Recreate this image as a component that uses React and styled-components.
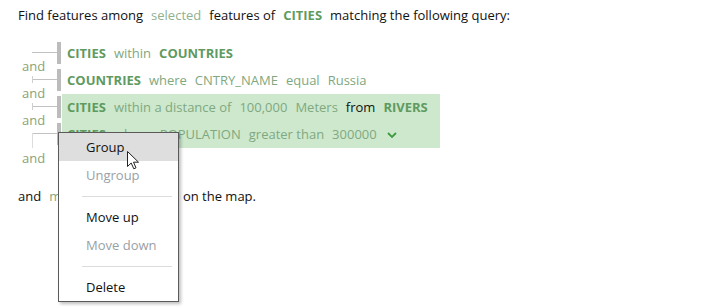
import styled, { createGlobalStyle } from "styled-components";

const GlobalStyle = createGlobalStyle`
  body {
    margin: 0;
    background: #fff;
    font-family: "Open Sans", "Noto Sans", sans-serif;
    font-size: 13px;
    color: #111;
  }
`;

const Page = styled.div`
  position: relative;
  min-height: 308px;
  box-sizing: border-box;
  padding: 6px 18px;
`;

const Sentence = styled.div`
  line-height: 18px;
  white-space: nowrap;
`;

const Word = styled.span`
  margin: 0 4px;
  color: ${({ $kind }) =>
    $kind === "layer" ? "#5f9a5f" : $kind === "op" ? "#80a880" : $kind === "link" ? "#90b090" : "#111"};
  font-weight: ${({ $kind }) => ($kind === "layer" ? 700 : 400)};
  &:first-child {
    margin-left: 0;
  }
`;

const Tree = styled.div`
  display: inline-grid;
  grid-template-columns: 39px 5px auto;
  margin-top: 16px;
`;

const Gutter = styled.div`
  height: 27px;
  display: flex;
  flex-direction: column;
`;

const AndLabel = styled.div`
  flex-shrink: 0;
  margin: 2px 0 0 4px;
  line-height: 16px;
  color: #8aa374;
`;

const Bar = styled.div`
  background: #bcbcbc;
  margin: 2px 1px 3px 0;
`;

const Content = styled.div`
  height: 27px;
  line-height: 27px;
  padding: 0 8px 0 5px;
  white-space: nowrap;
  background: ${({ $selected }) => ($selected ? "#cde8cd" : "transparent")};
`;

const Closing = styled(Sentence)`
  margin-top: 21px;
`;

const Menu = styled.div`
  position: absolute;
  left: 58px;
  top: 132px;
  width: 119px;
  background: #fff;
  border: 1px solid #5a5a5a;
  box-shadow: 2px 2px 3px rgba(0, 0, 0, 0.25);
`;

const MenuItem = styled.div`
  height: 28px;
  line-height: 28px;
  padding-left: 27px;
  color: ${({ $disabled }) => ($disabled ? "#9a9fa6" : "#111")};
  background: ${({ $active }) => ($active ? "#dedede" : "transparent")};
`;

const Separator = styled.div`
  height: 1px;
  margin: 7px 6px 6px 23px;
  background: #dcdcdc;
`;

const Cursor = styled.svg`
  position: absolute;
  left: 127px;
  top: 151px;
`;

const ConnectorSvg = styled.svg`
  display: block;
  flex-shrink: 0;
`;

function Connector({ tick, last }) {
  const h = last ? 27 : 16;
  return (
    <ConnectorSvg width="39" height={h}>
      <line x1="14" y1="12.5" x2="39" y2="12.5" stroke="#c2c2c2" />
      {tick && <line x1="14.5" y1="9" x2="14.5" y2="16" stroke="#cfcfcf" />}
      {last && <line x1="14.5" y1="12" x2="14.5" y2="27" stroke="#dcdcdc" />}
    </ConnectorSvg>
  );
}

function Chevron() {
  return (
    <svg width="10" height="6" viewBox="0 0 10 6" style={{ margin: "0 4px 1px 6px" }}>
      <polyline points="1,1 5,5 9,1" fill="none" stroke="#3f9b3f" strokeWidth="1.8" />
    </svg>
  );
}

const rows = [
  {
    words: [
      ["layer", "CITIES"],
      ["op", "within"],
      ["layer", "COUNTRIES"],
    ],
  },
  {
    words: [
      ["layer", "COUNTRIES"],
      ["op", "where"],
      ["op", "CNTRY_NAME"],
      ["op", "equal"],
      ["op", "Russia"],
    ],
  },
  {
    selected: true,
    words: [
      ["layer", "CITIES"],
      ["op", "within a distance of"],
      ["op", "100,000"],
      ["op", "Meters"],
      ["plain", "from"],
      ["layer", "RIVERS"],
    ],
  },
  {
    selected: true,
    chevron: true,
    words: [
      ["layer", "CITIES"],
      ["op", "where"],
      ["op", "POPULATION"],
      ["op", "greater than"],
      ["op", "300000"],
    ],
  },
];

export default function App() {
  return (
    <Page>
      <GlobalStyle />
      <Sentence>
        <Word>Find features among</Word>
        <Word $kind="link">selected</Word>
        <Word>features of</Word>
        <Word $kind="layer">CITIES</Word>
        <Word>matching the following query:</Word>
      </Sentence>

      <Tree>
        {rows.map((row, i) => {
          const last = i === rows.length - 1;
          return [
            <Gutter key={`g${i}`}>
              <Connector tick={i > 0 && !last} last={last} />
              {!last && <AndLabel>and</AndLabel>}
            </Gutter>,
            <Bar key={`b${i}`} />,
            <Content key={`c${i}`} $selected={row.selected}>
              {row.words.map(([kind, text], j) => (
                <Word key={j} $kind={kind}>
                  {text}
                </Word>
              ))}
              {row.chevron && <Chevron />}
            </Content>,
          ];
        })}
      </Tree>
      <AndLabel>and</AndLabel>

      <Closing>
        <Word>and</Word>
        <Word $kind="op">mark them in a table</Word>
        <Word>on the map.</Word>
      </Closing>

      <Menu>
        <MenuItem $active>Group</MenuItem>
        <MenuItem $disabled>Ungroup</MenuItem>
        <Separator />
        <MenuItem>Move up</MenuItem>
        <MenuItem $disabled>Move down</MenuItem>
        <Separator />
        <MenuItem>Delete</MenuItem>
      </Menu>

      <Cursor width="13" height="19" viewBox="0 0 13 19">
        <path d="M0.5,0.5 L0.5,15.5 L4.2,12 L6.8,17.8 L9,16.8 L6.5,11.2 L11.5,11.2 Z" fill="#fff" stroke="#222" strokeWidth="1" strokeLinejoin="round" />
      </Cursor>
    </Page>
  );
}
